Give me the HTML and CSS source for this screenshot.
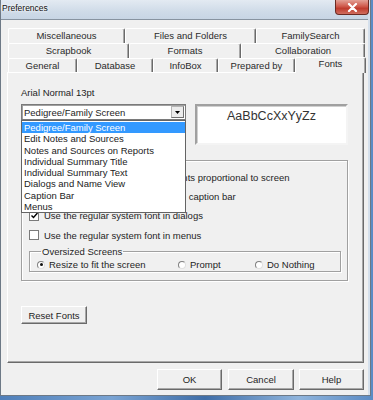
FILE: index.html
```html
<!DOCTYPE html>
<html>
<head>
<meta charset="utf-8">
<link rel="stylesheet" href="styles.css">
</head>
<body>
<div class="desktop">
  <div class="window">
    <div class="titlebar">
      <span class="title">Preferences</span>
      <div class="close">
        <svg width="11" height="9" viewBox="0 0 11 9"><path d="M2 1 L9 8 M9 1 L2 8" stroke="#fff" stroke-width="2.2" stroke-linecap="round"/></svg>
      </div>
    </div>
    <div class="client">
      <div class="tabs">
        <div class="tab-row row1">
          <div class="tab">Miscellaneous</div>
          <div class="tab">Files and Folders</div>
          <div class="tab">FamilySearch</div>
        </div>
        <div class="tab-row row2">
          <div class="tab">Scrapbook</div>
          <div class="tab">Formats</div>
          <div class="tab">Collaboration</div>
        </div>
        <div class="tab-row row3">
          <div class="tab">General</div>
          <div class="tab">Database</div>
          <div class="tab">InfoBox</div>
          <div class="tab">Prepared by</div>
          <div class="tab active">Fonts</div>
        </div>
      </div>
      <div class="panel">
        <div class="font-name">Arial Normal 13pt</div>
        <div class="font-row">
          <div class="combo-wrap">
            <div class="combo">
              <span class="combo-text">Pedigree/Family Screen</span>
              <span class="combo-btn"><svg width="5" height="3" viewBox="0 0 5 3"><path d="M0 0 H5 L2.5 3 Z" fill="#000"/></svg></span>
            </div>
            <ul class="list">
              <li class="sel">Pedigree/Family Screen</li>
              <li>Edit Notes and Sources</li>
              <li>Notes and Sources on Reports</li>
              <li>Individual Summary Title</li>
              <li>Individual Summary Text</li>
              <li>Dialogs and Name View</li>
              <li>Caption Bar</li>
              <li>Menus</li>
            </ul>
          </div>
          <div class="preview">AaBbCcXxYyZz</div>
        </div>
        <div class="group">
          <div class="check-row"><span class="box checked"></span><span>Scale Pedigree/Family Screen fonts proportional to screen</span></div>
          <div class="check-row"><span class="box"></span><span>Use the regular system font in the caption bar</span></div>
          <div class="check-row"><span class="box checked"><svg width="7" height="7" viewBox="0 0 7 7"><path d="M0.5 3.5 L2.5 5.5 L6.5 1" stroke="#000" stroke-width="1.4" fill="none"/></svg></span><span>Use the regular system font in dialogs</span></div>
          <div class="check-row"><span class="box"></span><span>Use the regular system font in menus</span></div>
          <fieldset class="oversized">
            <legend>Oversized Screens</legend>
            <div class="radio-row">
              <div class="radio-item r1"><span class="radio on"></span><span>Resize to fit the screen</span></div>
              <div class="radio-item r2"><span class="radio"></span><span>Prompt</span></div>
              <div class="radio-item r3"><span class="radio"></span><span>Do Nothing</span></div>
            </div>
          </fieldset>
        </div>
        <div class="btn reset">Reset Fonts</div>
      </div>
      <div class="buttons">
        <div class="btn ok">OK</div>
        <div class="btn cancel">Cancel</div>
        <div class="btn help">Help</div>
      </div>
    </div>
  </div>
</div>
</body>
</html>
```

FILE: styles.css
```css
* { box-sizing: border-box; }
html, body { margin: 0; padding: 0; }
body {
  font-family: "Liberation Sans", Arial, sans-serif;
  font-size: 9.5px;
  color: #1e1e1e;
}
.desktop {
  width: 373px;
  height: 400px;
  overflow: hidden;
  background: linear-gradient(90deg, #4f7fb9 0%, #79a3d3 30%, #3f6ea8 55%, #8fb4dc 80%, #5b8bc4 100%);
}
.window {
  width: 371px;
  height: 396px;
  background: #d5e0ec;
  border-left: 1px solid #6d7986;
  border-right: 1px solid #6d7986;
  border-bottom: 1px solid #6d7986;
  display: flex;
  flex-direction: column;
  padding-right: 2px;
}
.titlebar {
  height: 19px;
  flex: none;
  display: flex;
  justify-content: space-between;
  align-items: flex-start;
  background: linear-gradient(180deg, #e3eaf2 0%, #cfdbe8 60%, #c7d5e4 100%);
}
.title {
  font-size: 8.5px;
  color: #101010;
  padding: 3px 0 0 1px;
  text-shadow: 0 0 3px #fff, 0 0 3px #fff;
}
.close {
  width: 34px;
  height: 15px;
  margin-right: -1px;
  border: 1px solid #6b2a22;
  border-top: none;
  border-radius: 0 0 4px 4px;
  background: linear-gradient(180deg, #e3a196 0%, #cf5a4c 45%, #bf3c2e 60%, #d06e5f 100%);
  display: flex;
  align-items: center;
  justify-content: center;
}
.client {
  flex: 1;
  background: #f0f0f0;
  border-top: 1px solid #8793a0;
  padding: 8px 2px 0 6px;
  display: flex;
  flex-direction: column;
}
.tabs {
  display: flex;
  flex-direction: column;
  padding: 0 0 0 1px;
  margin-right: 1px;
}
.tab-row {
  display: grid;
}
.row1 { grid-template-columns: 117px 131px 1fr; height: 15px; }
.row2 { grid-template-columns: 121px 112px 1fr; height: 15px; }
.row3 { grid-template-columns: 69px 76px 65px 77px 1fr; height: 14px; align-items: stretch; }
.tab {
  border-top: 1px solid #fff;
  border-left: 1px solid #fff;
  border-right: 1px solid #6a6a6a;
  border-radius: 2px 2px 0 0;
  box-shadow: inset -1px 0 0 #a8a8a8;
  text-align: center;
  line-height: 13px;
  white-space: nowrap;
  background: #f0f0f0;
  color: #2a2a2a;
}
.tab.active {
  position: relative;
  z-index: 2;
  margin-top: -1px;
  margin-bottom: -1px;
  line-height: 12px;
  margin-right: -1px;
}
.panel {
  width: 357px;
  height: 291px;
  border-top: 1px solid #fff;
  border-left: 1px solid #fff;
  border-right: 1px solid #6a6a6a;
  border-bottom: 1px solid #6a6a6a;
  box-shadow: inset -1px -1px 0 #a8a8a8;
  padding: 14px 0 0 13px;
  display: flex;
  flex-direction: column;
  align-items: flex-start;
}
.font-name { line-height: 12px; }
.font-row {
  margin-top: 5px;
  display: flex;
  gap: 9px;
  align-items: flex-start;
}
.combo-wrap { position: relative; }
.combo {
  width: 165px;
  height: 16px;
  border: 1px solid #7a7a7a;
  box-shadow: inset 1px 1px 0 #a0a0a0;
  background: #fff;
  display: flex;
  align-items: center;
  justify-content: space-between;
  padding: 0 1px 0 2px;
}
.combo-btn {
  width: 13px;
  height: 12px;
  background: #ececec;
  border: 1px solid #b5b5b5;
  border-right-color: #707070;
  border-bottom-color: #707070;
  display: flex;
  align-items: center;
  justify-content: center;
}
.list {
  position: absolute;
  top: 16px;
  left: 0;
  width: 165px;
  margin: 0;
  padding: 1px 0 0 0;
  list-style: none;
  background: #fff;
  border: 1px solid #646464;
  z-index: 5;
}
.list li {
  height: 11.3px;
  line-height: 11.3px;
  padding-left: 2px;
  white-space: nowrap;
  color: #222;
}
.list li.sel {
  background: #3399ff;
  color: #fff;
}
.preview {
  width: 153px;
  height: 41px;
  background: #fff;
  border: 2px solid;
  border-color: #a0a0a0 #f4f4f4 #f4f4f4 #a0a0a0;
  box-shadow: inset 1px 1px 0 #d0d0d0;
  text-align: center;
  font-size: 12.5px;
  line-height: 14px;
  padding-top: 3px;
  color: #333;
}
.group {
  margin-top: 15px;
  width: 327px;
  height: 121px;
  border: 1px solid #a0a0a0;
  box-shadow: 1px 1px 0 #fff, inset 1px 1px 0 #fff;
  padding: 7px 6px 0 7px;
}
.check-row {
  height: 19.2px;
  display: flex;
  align-items: center;
  gap: 5px;
  white-space: nowrap;
}
.box {
  width: 10px;
  height: 10px;
  background: #fff;
  border: 1px solid #7a7a7a;
  display: flex;
  align-items: center;
  justify-content: center;
  flex: none;
}
.oversized {
  margin: 0;
  margin-top: 2px;
  height: 25px;
  border: 1px solid #a0a0a0;
  box-shadow: 1px 1px 0 #fff, inset 1px 1px 0 #fff;
  padding: 0 0 0 7px;
}
.oversized legend {
  padding: 0 1px;
  margin-left: 4px;
  line-height: 10px;
}
.radio-row {
  display: flex;
  align-items: center;
  height: 16px;
  margin-top: 0;
}
.radio-item {
  display: flex;
  align-items: center;
  gap: 4px;
  white-space: nowrap;
}
.r1 { width: 141px; }
.r2 { width: 77px; }
.radio {
  width: 8px;
  height: 8px;
  border-radius: 50%;
  background: #fff;
  border: 1px solid;
  border-color: #808080 #e0e0e0 #e0e0e0 #808080;
  display: flex;
  align-items: center;
  justify-content: center;
  flex: none;
}
.radio.on::after {
  content: "";
  width: 3px;
  height: 3px;
  border-radius: 50%;
  background: #111;
}
.btn {
  background: #f0f0f0;
  border-top: 1px solid #fff;
  border-left: 1px solid #fff;
  border-right: 1px solid #6a6a6a;
  border-bottom: 1px solid #6a6a6a;
  box-shadow: inset -1px -1px 0 #a8a8a8;
  display: flex;
  align-items: center;
  justify-content: center;
  white-space: nowrap;
}
.reset {
  margin-top: 25px;
  width: 66px;
  height: 18px;
}
.buttons {
  display: flex;
  justify-content: flex-end;
  margin-top: 6px;
  padding-right: 1px;
  width: 358px;
}
.buttons .btn { height: 21px; }
.ok { width: 65px; margin-right: 6px; }
.cancel { width: 66px; margin-right: 5px; }
.help { width: 65px; }
```
